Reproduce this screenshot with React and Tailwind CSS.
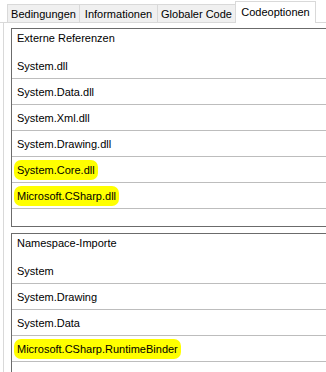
import React from "react";

const font = { fontFamily: '"Liberation Sans", Arial, sans-serif' };

function Row({ children, hl }) {
  return (
    <div className="h-[26px] border-b border-[#bdbdbd] flex items-center pl-[5px]">
      {hl ? (
        <span className="bg-[#ffff00] -ml-[3px] px-[3px] py-[3px] rounded-[7px] leading-[14px]">
          {children}
        </span>
      ) : (
        <span className="leading-[14px]">{children}</span>
      )}
    </div>
  );
}

function Box({ title, rows, emptyH }) {
  return (
    <div className="w-[340px] border-l border-t border-b border-[#6b6b6b]">
      <div className="h-[24px] pl-[5px] pt-[2px] leading-[14px]">{title}</div>
      {rows.map((r) => (
        <Row key={r.t} hl={r.hl}>
          {r.t}
        </Row>
      ))}
      <div className={emptyH} />
    </div>
  );
}

export default function App() {
  return (
    <div
      className="w-[326px] h-[372px] overflow-hidden bg-white text-[11px] text-black"
      style={font}
    >
      <div className="h-[23px] border-b border-[#d9d9d9] flex items-end pl-[7px]">
        <div className="w-[73px] h-[18px] border-t border-l border-r border-[#d9d9d9] bg-[#f0f0f0] text-center pt-[2px] leading-[14px]">
          Bedingungen
        </div>
        <div className="-ml-px w-[79px] h-[18px] border-t border-l border-r border-[#d9d9d9] bg-[#f0f0f0] text-center pt-[2px] leading-[14px]">
          Informationen
        </div>
        <div className="-ml-px w-[79px] h-[18px] border-t border-l border-r border-[#d9d9d9] bg-[#f0f0f0] text-center pt-[2px] leading-[14px]">
          Globaler Code
        </div>
        <div className="-ml-px -mb-px relative z-10 w-[81px] h-[22px] border-t border-l border-r border-[#d9d9d9] bg-white text-center pt-[3px] leading-[14px]">
          Codeoptionen
        </div>
      </div>
      <div className="ml-[3px] h-[349px] border-l border-[#d9d9d9] pl-[7px] pt-[5px] flex flex-col gap-[6px]">
        <Box
          title="Externe Referenzen"
          rows={[
            { t: "System.dll" },
            { t: "System.Data.dll" },
            { t: "System.Xml.dll" },
            { t: "System.Drawing.dll" },
            { t: "System.Core.dll", hl: true },
            { t: "Microsoft.CSharp.dll", hl: true },
          ]}
          emptyH="h-[17px]"
        />
        <Box
          title="Namespace-Importe"
          rows={[
            { t: "System" },
            { t: "System.Drawing" },
            { t: "System.Data" },
            { t: "Microsoft.CSharp.RuntimeBinder", hl: true },
          ]}
          emptyH="h-[30px]"
        />
      </div>
    </div>
  );
}
